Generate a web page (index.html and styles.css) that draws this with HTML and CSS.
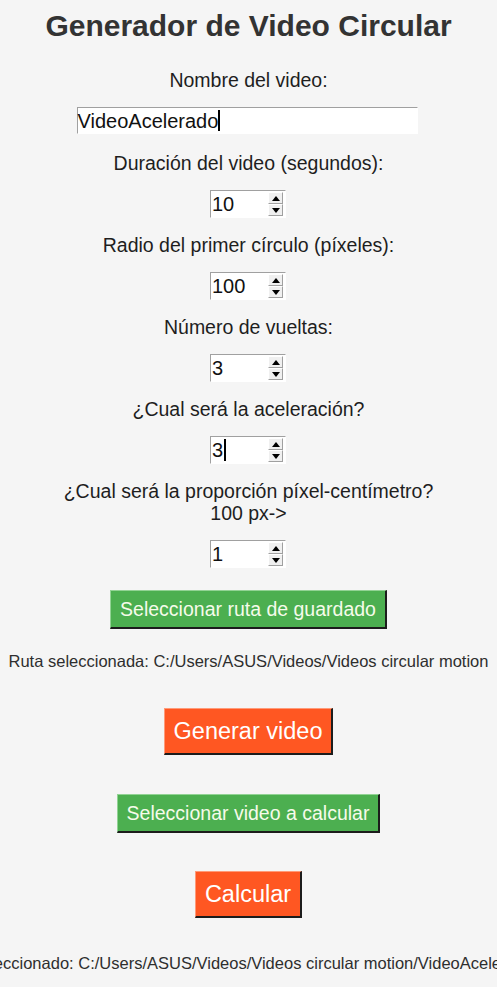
FILE: index.html
```html
<!DOCTYPE html>
<html lang="es">
<head>
<meta charset="utf-8">
<title>Generador de Video Circular</title>
<link rel="stylesheet" href="styles.css">
</head>
<body>
<main class="app">
  <h1 class="title">Generador de Video Circular</h1>

  <div class="label">Nombre del video:</div>
  <div class="entry"><span class="value">VideoAcelerado</span><span class="caret"></span></div>

  <div class="label label-after-entry">Duración del video (segundos):</div>
  <div class="spin"><span class="value">10</span><span class="arrows"><span class="arr up"></span><span class="arr down"></span></span></div>

  <div class="label">Radio del primer círculo (píxeles):</div>
  <div class="spin"><span class="value">100</span><span class="arrows"><span class="arr up"></span><span class="arr down"></span></span></div>

  <div class="label">Número de vueltas:</div>
  <div class="spin"><span class="value">3</span><span class="arrows"><span class="arr up"></span><span class="arr down"></span></span></div>

  <div class="label">¿Cual será la aceleración?</div>
  <div class="spin"><span class="value">3</span><span class="caret caret-spin"></span><span class="arrows"><span class="arr up"></span><span class="arr down"></span></span></div>

  <div class="label">¿Cual será la proporción píxel-centímetro?<br>100 px-&gt;</div>
  <div class="spin"><span class="value">1</span><span class="arrows"><span class="arr up"></span><span class="arr down"></span></span></div>

  <button class="btn btn-green btn-first">Seleccionar ruta de guardado</button>
  <div class="path path-ruta">Ruta seleccionada: C:/Users/ASUS/Videos/Videos circular motion</div>
  <button class="btn btn-orange btn-gen">Generar video</button>
  <button class="btn btn-green btn-sel">Seleccionar video a calcular</button>
  <button class="btn btn-orange btn-calc">Calcular</button>
  <div class="path path-video"><span>Video seleccionado: C:/Users/ASUS/Videos/Videos circular motion/VideoAcelerado.mp4</span></div>
</main>
</body>
</html>
```

FILE: styles.css
```css
html, body {
  margin: 0;
  padding: 0;
  background: #f5f5f5;
  overflow: hidden;
}

body {
  font-family: "Liberation Sans", Arial, sans-serif;
  color: #1e1e1e;
  width: 497px;
  height: 987px;
}

.app {
  display: flex;
  flex-direction: column;
  align-items: center;
  gap: 16px;
  padding-top: 8px;
}

.title {
  margin: 0 0 9px;
  font-size: 30px;
  line-height: 36px;
  font-weight: bold;
  color: #333;
}

.label {
  font-size: 19.5px;
  line-height: 22px;
  text-align: center;
  color: #1e1e1e;
}

.label-after-entry {
  margin-top: 2px;
}

.entry {
  box-sizing: border-box;
  width: 341px;
  height: 27px;
  background: #fff;
  border: 1px solid;
  border-color: #a0a0a0 #ffffff #ffffff #a0a0a0;
  display: flex;
  align-items: center;
  margin-left: -3px;
}

.value {
  font-size: 20px;
  line-height: 24px;
  color: #111;
}

.caret {
  display: inline-block;
  width: 2px;
  height: 21px;
  background: #000;
}

.caret-spin {
  height: 22px;
  margin-left: 1px;
}

.spin {
  box-sizing: border-box;
  width: 76px;
  height: 28px;
  background: #fff;
  border: 1px solid;
  border-color: #a0a0a0 #ffffff #ffffff #a0a0a0;
  display: flex;
  align-items: center;
  padding-left: 1px;
  margin-left: -1px;
}

.arrows {
  margin-left: auto;
  margin-right: 2px;
  align-self: stretch;
  width: 15px;
  display: flex;
  flex-direction: column;
  padding: 1px 0;
}

.arr {
  flex: 1;
  background: #f0f0f0;
  border: 1px solid;
  border-color: #ffffff #a0a0a0 #a0a0a0 #ffffff;
  display: flex;
  align-items: center;
  justify-content: center;
}

.arr::after {
  content: "";
  width: 0;
  height: 0;
  border-left: 4px solid transparent;
  border-right: 4px solid transparent;
}

.up::after {
  border-bottom: 5px solid #000;
}

.down::after {
  border-top: 5px solid #000;
}

.btn {
  box-sizing: border-box;
  font-family: "Liberation Sans", Arial, sans-serif;
  color: #fff;
  border-style: solid;
  border-width: 1px 2px 2px 1px;
  padding: 0 9px;
  cursor: pointer;
}

.btn-green {
  background: #4caf50;
  border-color: #92d394 #1c1c1c #1c1c1c #92d394;
  font-size: 19.5px;
  height: 39px;
  color: #f6fbea;
}

.btn-orange {
  background: #ff5722;
  border-color: #ff9a78 #1c1c1c #1c1c1c #ff9a78;
  font-size: 23.5px;
  height: 47px;
}

.btn-first {
  margin-top: 6px;
}

.path {
  font-size: 16.5px;
  line-height: 19px;
  color: #2e2e2e;
  white-space: nowrap;
}

.path-ruta {
  margin-top: 7px;
}

.btn-gen {
  margin-top: 21px;
}

.btn-sel {
  margin-top: 23px;
}

.btn-calc {
  margin-top: 22px;
}

.path-video {
  margin-top: 20px;
  width: 497px;
  display: flex;
  justify-content: center;
}

.path-video span {
  flex: none;
}
```
